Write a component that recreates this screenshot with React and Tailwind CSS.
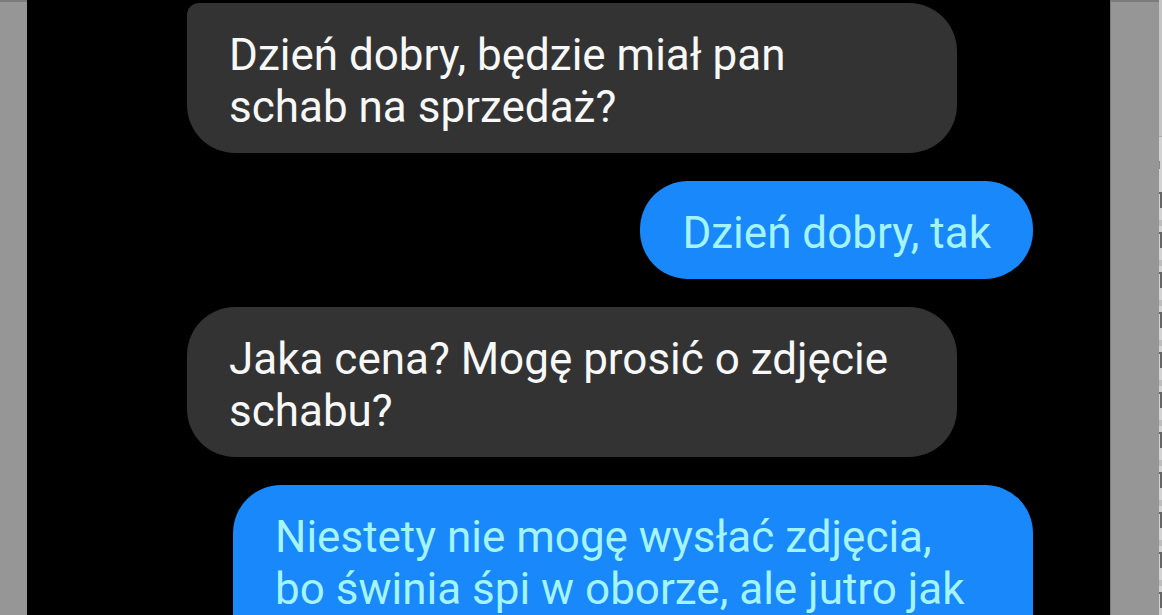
const messages = [
  {
    id: 1,
    mine: false,
    lines: ["Dzień dobry, będzie miał pan", "schab na sprzedaż?"],
  },
  { id: 2, mine: true, lines: ["Dzień dobry, tak"] },
  { id: 3, mine: false, lines: ["Jaka cena? Mogę prosić o zdjęcie", "schabu?"] },
  {
    id: 4,
    mine: true,
    long: true,
    lines: ["Niestety nie mogę wysłać zdjęcia,", "bo świnia śpi w oborze, ale jutro jak"],
  },
];

// rows of the page that stay visible past the overlay
const ROWS = Array.from({ length: 11 }, (_, i) => i);

function Bubble({ message, first }) {
  const { mine, long, lines } = message;
  return (
    <li
      className={[
        "pt-[26px] px-[42px]",
        mine
          ? "self-end bg-[#1888fb] text-[#a4f4fb]"
          : "w-[91%] bg-[#333333] text-[#f8f8f8]",
        // the long one runs on below the fold
        long ? "w-[800px] max-w-full pb-20 rounded-t-[48px]" : "pb-5 rounded-[48px]",
        first ? "rounded-tl-xl" : "",
      ].join(" ")}
    >
      <p>
        {lines.map((line) => (
          <span key={line} className="block whitespace-nowrap">
            {line}
          </span>
        ))}
      </p>
    </li>
  );
}

export default function App() {
  return (
    <div className="flex h-screen overflow-hidden bg-[#969696] font-['Roboto',sans-serif]">
      <div className="w-[27px] shrink-0 border-t-2 border-[#7c7c7c]" />

      <main className="flex-1 bg-black pt-[3px] pl-40 pr-[77px]">
        <ul className="flex flex-col gap-7 text-[44px] leading-[52px]">
          {messages.map((m, i) => (
            <Bubble key={m.id} message={m} first={i === 0} />
          ))}
        </ul>
      </main>

      <div className="w-[49px] shrink-0 border-l border-t-2 border-[#7c7c7c]" />

      {/* Strip of the page underneath */}
      <div className="w-[3px] shrink-0 bg-[#d2d2d2]">
        <div className="h-[137px] border-b border-[#aaaaaa] bg-[#c4c4c4]" />
        <div className="mt-6 h-2 w-px bg-[#888888]" />
        <div className="pt-[23px]">
          {ROWS.map((n) => (
            <div key={n} className="h-10">
              <div className="h-4 border-t-2 border-r-2 border-[#666666]" />
              <div className="mt-3 h-[6px] bg-[#bbbbbb]" />
            </div>
          ))}
        </div>
      </div>
    </div>
  );
}
